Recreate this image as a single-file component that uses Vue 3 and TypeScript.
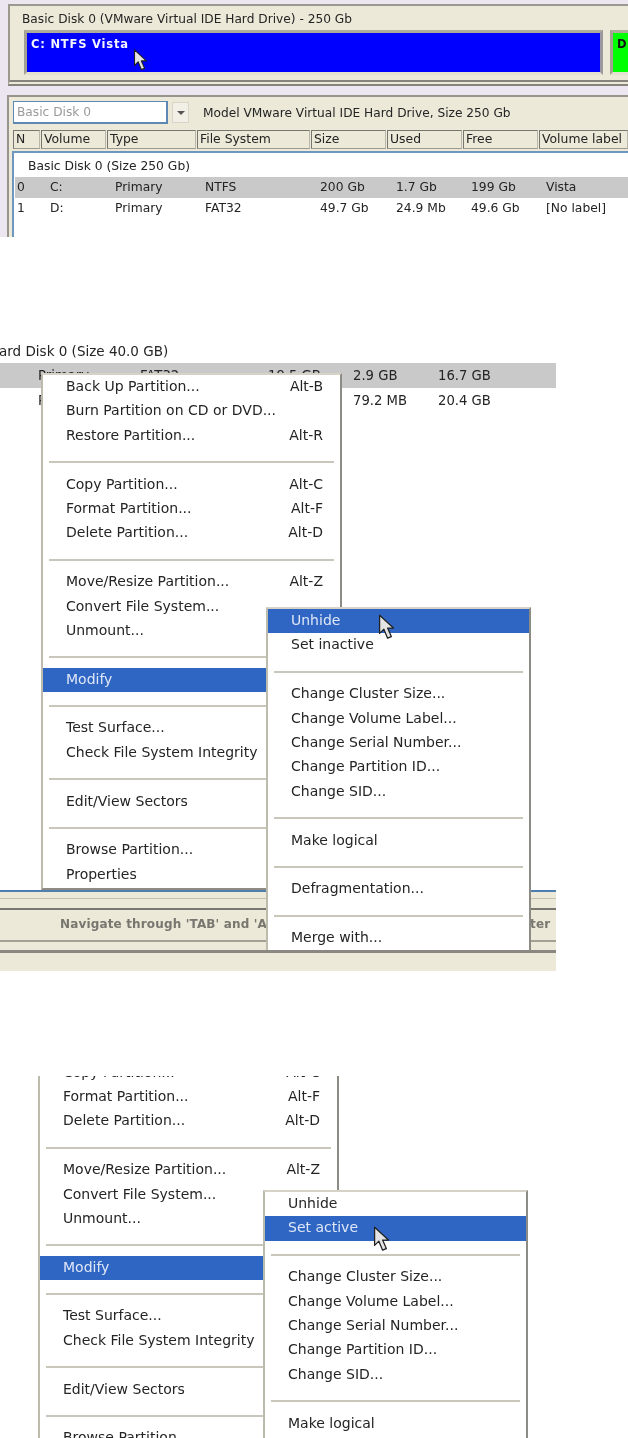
<script setup lang="ts">
interface Row { label?: string; key?: string; sep?: boolean; on?: boolean }

const mainRows: Row[] = [
  { label: 'Back Up Partition...', key: 'Alt-B' },
  { label: 'Burn Partition on CD or DVD...' },
  { label: 'Restore Partition...', key: 'Alt-R' },
  { sep: true },
  { label: 'Copy Partition...', key: 'Alt-C' },
  { label: 'Format Partition...', key: 'Alt-F' },
  { label: 'Delete Partition...', key: 'Alt-D' },
  { sep: true },
  { label: 'Move/Resize Partition...', key: 'Alt-Z' },
  { label: 'Convert File System...' },
  { label: 'Unmount...' },
  { sep: true },
  { label: 'Modify', on: true },
  { sep: true },
  { label: 'Test Surface...' },
  { label: 'Check File System Integrity' },
  { sep: true },
  { label: 'Edit/View Sectors' },
  { sep: true },
  { label: 'Browse Partition...' },
  { label: 'Properties' }
]

const tail: Row[] = [
  { sep: true },
  { label: 'Change Cluster Size...' },
  { label: 'Change Volume Label...' },
  { label: 'Change Serial Number...' },
  { label: 'Change Partition ID...' },
  { label: 'Change SID...' },
  { sep: true },
  { label: 'Make logical' },
  { sep: true },
  { label: 'Defragmentation...' },
  { sep: true },
  { label: 'Merge with...' }
]

const subHidden: Row[] = [{ label: 'Unhide', on: true }, { label: 'Set inactive' }, ...tail]
const subActive: Row[] = [{ label: 'Unhide' }, { label: 'Set active', on: true }, ...tail]

const headers = ['N', 'Volume', 'Type', 'File System', 'Size', 'Used', 'Free', 'Volume label']
const partitions = [
  ['0', 'C:', 'Primary', 'NTFS', '200 Gb', '1.7 Gb', '199 Gb', 'Vista'],
  ['1', 'D:', 'Primary', 'FAT32', '49.7 Gb', '24.9 Mb', '49.6 Gb', '[No label]']
]
const arrow = 'M1.5 1 L1.5 18 L5.5 14 L9 22.5 L12.5 21 L9 13 L14.5 13 Z'
</script>

<template>
  <div class="page">
    <section class="shot one">
      <div class="disk-panel">
        <div class="disk-title">Basic Disk 0 (VMware Virtual IDE Hard Drive) - 250 Gb</div>
        <div class="disk-map">
          <div class="part blue"><span>C: NTFS Vista</span></div>
          <div class="part green"><span>D:</span></div>
        </div>
      </div>
      <div class="list-panel">
        <div class="picker">
          <div class="combo">Basic Disk 0</div>
          <div class="combo-btn"><i></i></div>
          <div class="model">Model VMware Virtual IDE Hard Drive, Size 250 Gb</div>
        </div>
        <div class="grid head">
          <div v-for="h in headers" :key="h" class="th">{{ h }}</div>
        </div>
        <div class="tbody">
          <div class="group">Basic Disk 0 (Size 250 Gb)</div>
          <div v-for="(p, i) in partitions" :key="p[0]" class="grid tr" :class="{ sel: i === 0 }">
            <div v-for="(c, j) in p" :key="j" class="td">{{ c }}</div>
          </div>
        </div>
      </div>
      <svg class="cursor c1" width="14" height="22" viewBox="0 0 15 24"><path :d="arrow" /></svg>
    </section>

    <section class="shot two">
      <div class="group2">ard Disk 0 (Size 40.0 GB)</div>
      <div class="hrow sel"><span class="a">Primary</span><span class="b">FAT32</span><span class="c">19.5 GB</span><span class="d">2.9 GB</span><span class="e">16.7 GB</span></div>
      <div class="hrow"><span class="a">Primary</span><span class="b">FAT32</span><span class="c">20.5 GB</span><span class="d">79.2 MB</span><span class="e">20.4 GB</span></div>
      <div class="fill"></div>
      <div class="status">
        <div class="blue-line"></div>
        <div class="bar band1"></div>
        <div class="bar band2"></div>
        <div class="bar hint">Navigate through 'TAB' and 'Arrow' keys. Press the 'Enter' key to enter</div>
        <div class="bar band3"></div>
        <div class="bar foot"></div>
      </div>

      <div class="menu main m2">
        <div v-for="(r, i) in mainRows" :key="i" :class="r.sep ? 'sep' : ['item', { on: r.on }]">
          <template v-if="!r.sep"><span>{{ r.label }}</span><span v-if="r.key" class="key">{{ r.key }}</span></template>
        </div>
      </div>
      <div class="menu sub s2">
        <div v-for="(r, i) in subHidden" :key="i" :class="r.sep ? 'sep' : ['item', { on: r.on }]">
          <span v-if="!r.sep">{{ r.label }}</span>
        </div>
      </div>
      <svg class="cursor c2" width="16" height="26" viewBox="0 0 15 24"><path :d="arrow" /></svg>
    </section>

    <section class="shot three">
      <div class="menu main m3">
        <div v-for="(r, i) in mainRows" :key="i" :class="r.sep ? 'sep' : ['item', { on: r.on }]">
          <template v-if="!r.sep"><span>{{ r.label }}</span><span v-if="r.key" class="key">{{ r.key }}</span></template>
        </div>
      </div>
      <div class="menu sub s3">
        <div v-for="(r, i) in subActive" :key="i" :class="r.sep ? 'sep' : ['item', { on: r.on }]">
          <span v-if="!r.sep">{{ r.label }}</span>
        </div>
      </div>
      <svg class="cursor c3" width="16" height="26" viewBox="0 0 15 24"><path :d="arrow" /></svg>
    </section>
  </div>
</template>

<style>
html, body { background: #fff; }
</style>

<style scoped>
.page {
  width: 628px;
  height: 1438px;
  overflow: hidden;
  background: #fff;
  color: #242424;
  font-family: "DejaVu Sans", sans-serif;
  font-size: 14px;
  filter: blur(0.5px);
}
.shot { position: relative; overflow: hidden; }

/* first shot */
.one { height: 237px; background: #ece6f0; padding-top: 4px; box-sizing: border-box; }
.disk-panel {
  height: 82px;
  margin-left: 8px;
  box-sizing: border-box;
  background: #ece9d8;
  border: 2px solid #9c9a90;
  border-right: 0;
  border-bottom: 6px double #85837c;
  padding: 6px 0 0 12px;
}
.disk-title { font-size: 12.2px; line-height: 15px; white-space: nowrap; }
.disk-map { display: flex; gap: 7px; margin-top: 3px; padding-left: 2px; }
.part {
  height: 39px;
  border: 3px solid #e4e1d0;
  border-left-color: #a3a193;
  border-top-color: #aeac9c;
  font-size: 11.5px;
  font-weight: 700;
  letter-spacing: .8px;
}
.part span { display: block; padding: 4px 0 0 4px; }
.blue { width: 573px; background: #0000ff; color: #f4f4ff; flex: none; border-right-color: #9b99a0; }
.green { width: 30px; background: #00ff00; color: #111; flex: none; }
.list-panel {
  margin: 9px 0 0 7px;
  height: 143px;
  box-sizing: border-box;
  background: #ece9d8;
  border-top: 2px solid #96948c;
  border-left: 2px solid #96948c;
  padding: 4px 0 0 4px;
}
.picker { display: flex; align-items: center; height: 23px; }
.combo {
  width: 155px;
  height: 23px;
  box-sizing: border-box;
  background: #fff;
  border: 1px solid #5e88b4;
  border-right-width: 2px;
  border-bottom-width: 2px;
  color: #9a9a9a;
  font-size: 12.2px;
  line-height: 20px;
  padding-left: 3px;
}
.combo-btn {
  width: 17px;
  height: 21px;
  margin-left: 4px;
  background: #f2f0e6;
  border: 1px solid #d8d5c6;
  box-sizing: border-box;
  display: flex;
  align-items: center;
  justify-content: center;
}
.combo-btn i { border: 4px solid transparent; border-top: 4px solid #555; border-bottom: 0; display: block; }
.model { margin-left: 14px; font-size: 12.2px; white-space: nowrap; }
.grid {
  display: grid;
  grid-template-columns: 28px 66px 90px 114px 76px 76px 76px 90px;
}
.head { margin-top: 6px; height: 19px; }
.th {
  box-sizing: border-box;
  height: 19px;
  border: 1px solid #77766f;
  border-right: 1px solid #b9b7aa;
  border-bottom: 1px solid #9c9a8e;
  margin-right: 1px;
  font-size: 12.4px;
  line-height: 16px;
  padding-left: 2px;
  white-space: nowrap;
  overflow: hidden;
}
.tbody {
  height: 90px;
  background: #fff;
  border-top: 2px solid #6d97be;
  border-left: 2px solid #6d97be;
  margin-left: -1px;
  padding-top: 5px;
  box-sizing: border-box;
  margin-top: 2px;
  font-size: 12.3px;
}
.group { height: 19px; line-height: 16px; padding-left: 14px; }
.tr { height: 21px; line-height: 20px; margin-left: 1px; grid-template-columns: 33px 65px 90px 115px 76px 75px 75px 90px; }
.td { padding-left: 2px; white-space: nowrap; }
.sel { background: #c9c9c9; }

/* second shot */
.two {
  margin-top: 103px;
  height: 631px;
  width: 556px;
  display: flex;
  flex-direction: column;
}
.group2 { height: 23px; line-height: 22px; font-size: 13.5px; margin-left: -1px; white-space: nowrap; }
.hrow { height: 25px; flex: none; position: relative; font-size: 13.2px; }
.hrow span { position: absolute; top: 5px; white-space: nowrap; }
.a { left: 38px; } .b { left: 140px; } .c { left: 268px; } .d { left: 353px; } .e { left: 438px; }
.fill { flex: 1; }
.status { flex: none; }
.blue-line { height: 2px; background: #4f7fae; }
.bar { background: #ece9d8; box-sizing: border-box; }
.band1 { height: 7px; border-bottom: 1px solid #c4c2b4; }
.band2 { height: 11px; border-bottom: 2px solid #77766f; }
.hint {
  height: 32px;
  font-weight: 700;
  font-size: 12px;
  color: #77766f;
  line-height: 29px;
  padding-left: 60px;
  white-space: nowrap;
  overflow: hidden;
  letter-spacing: .15px;
  border-bottom: 2px solid #a3a196;
}
.band3 { height: 11px; border-bottom: 3px solid #8a8880; }
.foot { height: 18px; }

/* menus */
.menu {
  position: absolute;
  box-sizing: border-box;
  background: #fff;
  border-top: 2px solid #d6d3c6;
  border-left: 2px solid #bdbbac;
  border-right: 2px solid #8d8c84;
  font-size: 14px;
}
.main { width: 301px; padding-bottom: 1px; border-bottom: 2px solid #8d8c84; }
.sub { width: 265px; }
.m2 { left: 41px; top: 33px; }
.s2 { left: 266px; top: 267px; height: 343px; overflow: hidden; }
.m3 { left: 38px; top: -115px; }
.s3 { left: 263px; top: 114px; height: 290px; overflow: hidden; }
.item {
  height: 24.4px;
  line-height: 23.5px;
  padding: 0 17px 0 23px;
  display: flex;
  justify-content: space-between;
  white-space: nowrap;
}
.item.on { background: #2f66c4; color: #dfe7f6; }
.sep { height: 24.4px; position: relative; }
.sep::after {
  content: "";
  position: absolute;
  left: 6px;
  right: 6px;
  top: 13px;
  height: 2px;
  background: #c9c7ba;
}
.cursor { position: absolute; }
.cursor path { fill: #e4e4e4; stroke: #222; stroke-width: 1.2; stroke-linejoin: round; }
.c1 { left: 133px; top: 49px; }
.c2 { left: 378px; top: 274px; }
.c3 { left: 373px; top: 150px; }

/* third shot */
.three { margin-top: 105px; height: 362px; }
</style>
